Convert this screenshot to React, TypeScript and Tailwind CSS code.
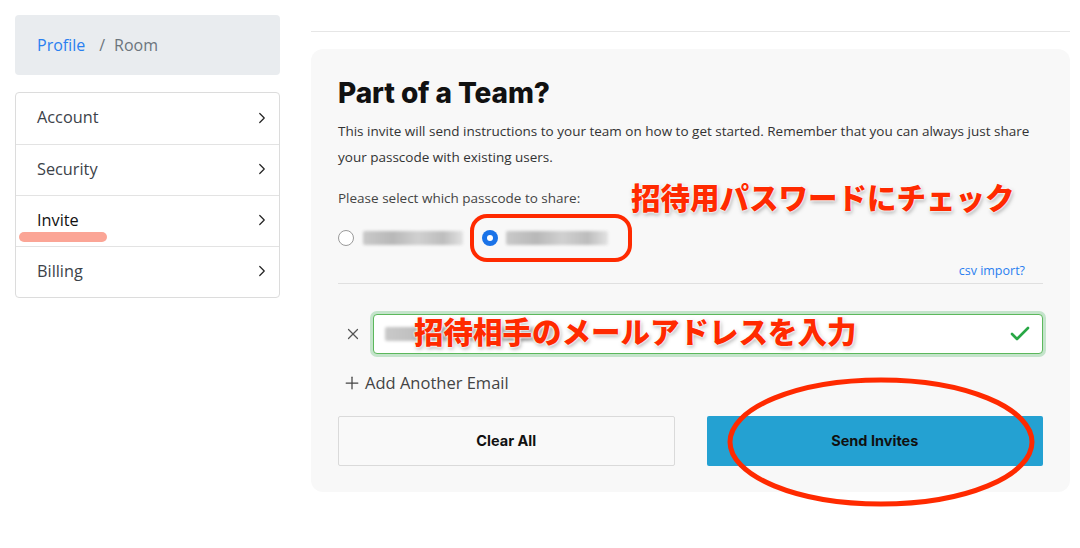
import { ChevronRight, X, Plus, Check } from 'lucide-react';

const menu = ['Account', 'Security', 'Invite', 'Billing'];

// blurred stand-in for a masked passcode / email
function Masked({ w }: { w: number }) {
  return (
    <div className="relative h-[14px]" style={{ width: w }}>
      <div className="absolute inset-0 rounded-[2px] bg-[linear-gradient(90deg,#c9c9c9,#b8b8b8_30%,#d0d0d0_55%,#bdbdbd_80%,#e2e2e2)] blur-[1.5px]" />
    </div>
  );
}

function Radio({ checked }: { checked?: boolean }) {
  return checked ? (
    <span className="w-[16px] h-[16px] rounded-full bg-[#1a73e8] flex items-center justify-center">
      <span className="w-[6px] h-[6px] rounded-full bg-white" />
    </span>
  ) : (
    <span className="w-[16px] h-[16px] rounded-full border border-[#9a9a9a] bg-white" />
  );
}

export default function App() {
  return (
    <div className="relative flex w-[1080px] h-[548px] bg-white font-['Open_Sans',sans-serif] text-[#333] overflow-hidden">
      {/* sidebar */}
      <aside className="w-[265px] ml-[15px] pt-[15px] shrink-0">
        <div className="h-[60px] rounded-[4px] bg-[#e9ecef] flex items-center px-[22px] text-[16px]">
          <span className="text-[#2a7ff0]">Profile</span>
          <span className="ml-[14px] text-[#6c757d]">/</span>
          <span className="ml-[9px] text-[#6c757d]">Room</span>
        </div>
        <ul className="mt-[17px] rounded-[4px] border border-[#dcdcdc] bg-white">
          {menu.map((m, i) => (
            <li
              key={m}
              className={`h-[51px] flex items-center justify-between pl-[21px] pr-[8px] pb-[2px] text-[16.3px] ${
                i > 0 ? 'border-t border-[#e3e3e3]' : ''
              } ${m === 'Invite' ? 'text-[#111]' : 'text-[#3c4249]'}`}
            >
              {m}
              <ChevronRight size={18} strokeWidth={1.6} className="text-[#222]" />
            </li>
          ))}
        </ul>
      </aside>

      {/* main */}
      <main className="flex-1 ml-[31px] mr-[10px]">
        <div className="mt-[31px] h-px bg-[#e6e6e6]" />
        <section className="mt-[17px] rounded-[12px] bg-[#f8f8f8] px-[27px] pt-[26px] pb-[26px]">
          <h2 className="text-[28px] leading-[36px] font-extrabold text-[#111] font-['Inter',sans-serif] tracking-[-0.1px]">
            Part of a Team?
          </h2>
          <p className="mt-[7px] text-[13.5px] leading-[26px] text-[#333]">
            This invite will send instructions to your team on how to get started. Remember that you can always just share your passcode with existing users.
          </p>
          <p className="mt-[16px] text-[13.5px] leading-[24px] text-[#444]">Please select which passcode to share:</p>

          <div className="mt-[16px] h-[24px] flex items-center">
            <Radio />
            <div className="ml-[9px]">
              <Masked w={100} />
            </div>
            <div className="ml-[19px]">
              <Radio checked />
            </div>
            <div className="ml-[8px]">
              <Masked w={102} />
            </div>
          </div>

          <div className="mt-[12px] pr-[18px] text-right text-[12.5px] leading-[18px] text-[#2a7ff0]">csv import?</div>
          <div className="mt-[3px] h-px bg-[#e0e0e0]" />

          <div className="mt-[30px] flex items-center">
            <div className="w-[35px] pl-[6px] text-[#555]">
              <X size={18} strokeWidth={1.6} />
            </div>
            <div className="flex-1 h-[40px] rounded-[4px] border border-[#5cb85c] bg-white ring-[3px] ring-[#28a745]/25 flex items-center justify-between pl-[11px] pr-[10px]">
              <Masked w={170} />
              <Check size={24} strokeWidth={2.6} className="text-[#28a745]" />
            </div>
          </div>

          <div className="mt-[17px] h-[24px] flex items-center pl-[4px] text-[16.5px] text-[#444]">
            <Plus size={20} strokeWidth={1.5} />
            <span className="ml-[3px]">Add Another Email</span>
          </div>

          <div className="mt-[21px] grid grid-cols-2 gap-[32px] font-['Inter',sans-serif] text-[14.5px] font-bold text-[#111]">
            <button className="h-[50px] rounded-[2px] border border-[#dadada] bg-[#f9f9f9]">Clear All</button>
            <button className="h-[50px] rounded-[2px] bg-[#24a1d2]">Send Invites</button>
          </div>
        </section>
      </main>

      {/* annotations */}
      <div className="absolute left-[19px] top-[232px] w-[88px] h-[10px] rounded-full bg-[#fba596]" />
      <div className="absolute left-[470px] top-[214px] w-[162px] h-[48px] rounded-[17px] border-[4px] border-[#ff2a00]" />
      <div className="absolute left-[631px] top-[176px] text-[29.5px] leading-[40px] font-black text-[#ff2a00] font-['Noto_Sans_CJK_JP',sans-serif] [text-shadow:0_0_2px_#fff,0_0_2px_#fff,0_0_3px_#fff,1px_2px_4px_rgba(0,0,0,0.35)] whitespace-nowrap">
        招待用パスワードにチェック
      </div>
      <div className="absolute left-[414px] top-[310px] text-[29.5px] leading-[40px] font-black text-[#ff2a00] font-['Noto_Sans_CJK_JP',sans-serif] [text-shadow:0_0_2px_#fff,0_0_2px_#fff,0_0_3px_#fff,1px_2px_4px_rgba(0,0,0,0.35)] whitespace-nowrap">
        招待相手のメールアドレスを入力
      </div>
      <svg className="absolute left-[724px] top-[374px]" width="316" height="136" viewBox="0 0 316 136">
        <ellipse cx="157" cy="68" rx="151" ry="62" fill="none" stroke="#ff2a00" strokeWidth="5" />
      </svg>
    </div>
  );
}
